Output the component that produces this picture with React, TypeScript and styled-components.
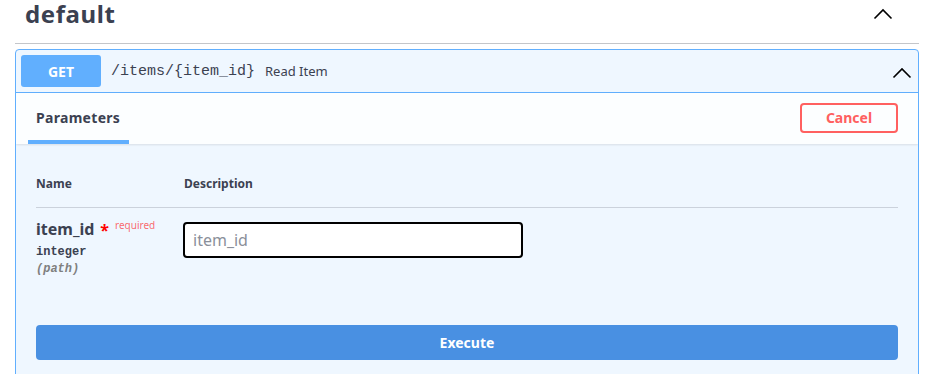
import React from 'react';
import styled, { createGlobalStyle } from 'styled-components';

const Global = createGlobalStyle`
  html, body { margin: 0; padding: 0; background: #fff; }
  body { font-family: "Noto Sans", "Open Sans", sans-serif; color: #3b4151; }
  * { box-sizing: border-box; }
`;

const Page = styled.div`
  width: 904px;
  margin-left: 15px;
`;

const TagHeader = styled.div`
  display: flex;
  align-items: center;
  justify-content: space-between;
  height: 44px;
  padding: 0 26px 16px 10px;
  border-bottom: 1px solid rgba(59, 65, 81, 0.3);
`;

const TagTitle = styled.h3`
  margin: 0;
  font-size: 24px;
  font-weight: 700;
  letter-spacing: 0.6px;
  color: #3b4151;
  line-height: 28px;
`;

const Chevron = styled.svg<{ $w: number }>`
  width: ${(p) => p.$w}px;
  height: ${(p) => p.$w}px;
  flex: none;
`;

const OpBlock = styled.div`
  margin-top: 5px;
  border: 1px solid #61affe;
  border-radius: 4px;
  background: #eff7ff;
  height: 340px;
  overflow: hidden;
`;

const Summary = styled.div`
  display: flex;
  align-items: center;
  padding: 5px;
  border-bottom: 1px solid #61affe;
`;

const Method = styled.span`
  width: 80px;
  height: 32px;
  border-radius: 3px;
  background: #61affe;
  color: #fff;
  font-size: 14px;
  font-weight: 700;
  display: flex;
  align-items: center;
  justify-content: center;
`;

const Path = styled.span`
  margin-left: 10px;
  font-family: "Liberation Mono", "DejaVu Sans Mono", monospace;
  font-size: 15px;
  color: #3b4151;
`;

const Desc = styled.span`
  margin-left: 10px;
  font-size: 13px;
  color: #3b4151;
  flex: 1;
`;

const SummaryArrow = styled.span`
  margin-right: 1px;
  margin-top: 3px;
  display: flex;
`;

const TabHeader = styled.div`
  display: flex;
  align-items: center;
  justify-content: space-between;
  height: 51px;
  padding: 0 20px 0 12px;
  background: rgba(255, 255, 255, 0.8);
  box-shadow: 0 1px 2px rgba(0, 0, 0, 0.1);
`;

const Tab = styled.div`
  align-self: stretch;
  display: flex;
  align-items: center;
  padding: 2px 8px 0;
  width: 101px;
  font-size: 14px;
  font-weight: 700;
  letter-spacing: 0.3px;
  color: #3b4151;
  border-bottom: 4px solid #61affe;
`;

const CancelButton = styled.button`
  width: 98px;
  height: 30px;
  border: 2px solid #ff6060;
  border-radius: 4px;
  background: transparent;
  color: #ff6060;
  font-family: inherit;
  font-size: 14px;
  font-weight: 700;
  margin-top: -2px;
`;

const Body = styled.div`
  padding: 0 20px;
`;

const HeadRow = styled.div`
  display: grid;
  grid-template-columns: 148px 1fr;
  padding: 31px 0 15px;
  border-bottom: 1px solid rgba(59, 65, 81, 0.2);
  font-size: 12px;
  font-weight: 700;
  color: #3b4151;
`;

const ParamRow = styled.div`
  display: grid;
  grid-template-columns: 147px 1fr;
  padding-top: 10px;
`;

const ParamName = styled.div`
  display: flex;
  align-items: flex-start;
  font-size: 16px;
  font-weight: 700;
  color: #3b4151;
  line-height: 22px;
`;

const Star = styled.span`
  color: red;
  margin-left: 6px;
  font-size: 16px;
  position: relative;
  top: 1px;
`;

const Required = styled.span`
  font-size: 10px;
  font-weight: 400;
  color: rgba(255, 0, 0, 0.6);
  margin-left: 6px;
  line-height: 14px;
`;

const ParamType = styled.div`
  font-family: "Liberation Mono", "DejaVu Sans Mono", monospace;
  font-size: 12px;
  font-weight: 700;
  color: #3b4151;
  margin-top: 5px;
`;

const ParamIn = styled.div`
  font-family: "Liberation Mono", "DejaVu Sans Mono", monospace;
  font-size: 12px;
  font-weight: 700;
  font-style: italic;
  color: gray;
  margin-top: 3px;
`;

const Input = styled.input`
  width: 340px;
  height: 36px;
  margin-top: 4px;
  border: 2px solid #000;
  border-radius: 4px;
  background: #fff;
  padding: 0 8px;
  font-family: "Noto Sans", sans-serif;
  font-size: 16px;
  color: #3b4151;
  outline: none;
  &::placeholder { color: #8a8f9a; }
`;

const ExecuteButton = styled.button`
  display: block;
  width: 100%;
  height: 35px;
  margin-top: 49px;
  border: none;
  border-radius: 4px;
  background: #4990e2;
  color: #fff;
  font-family: inherit;
  font-size: 14px;
  font-weight: 700;
`;

const Up = ({ w }: { w: number }) => (
  <Chevron $w={w} viewBox="0 0 20 20">
    <path d="M1.5 14.5 L10 6 L18.5 14.5" fill="none" stroke="#000" strokeWidth="1.6" />
  </Chevron>
);

export default function App() {
  return (
    <Page>
      <Global />
      <TagHeader>
        <TagTitle>default</TagTitle>
        <Up w={20} />
      </TagHeader>
      <OpBlock>
        <Summary>
          <Method>GET</Method>
          <Path>/items/&#123;item_id&#125;</Path>
          <Desc>Read Item</Desc>
          <SummaryArrow>
            <Up w={20} />
          </SummaryArrow>
        </Summary>
        <TabHeader>
          <Tab>Parameters</Tab>
          <CancelButton>Cancel</CancelButton>
        </TabHeader>
        <Body>
          <HeadRow>
            <div>Name</div>
            <div>Description</div>
          </HeadRow>
          <ParamRow>
            <div>
              <ParamName>
                item_id<Star>*</Star>
                <Required>required</Required>
              </ParamName>
              <ParamType>integer</ParamType>
              <ParamIn>(path)</ParamIn>
            </div>
            <div>
              <Input placeholder="item_id" />
            </div>
          </ParamRow>
          <ExecuteButton>Execute</ExecuteButton>
        </Body>
      </OpBlock>
    </Page>
  );
}
